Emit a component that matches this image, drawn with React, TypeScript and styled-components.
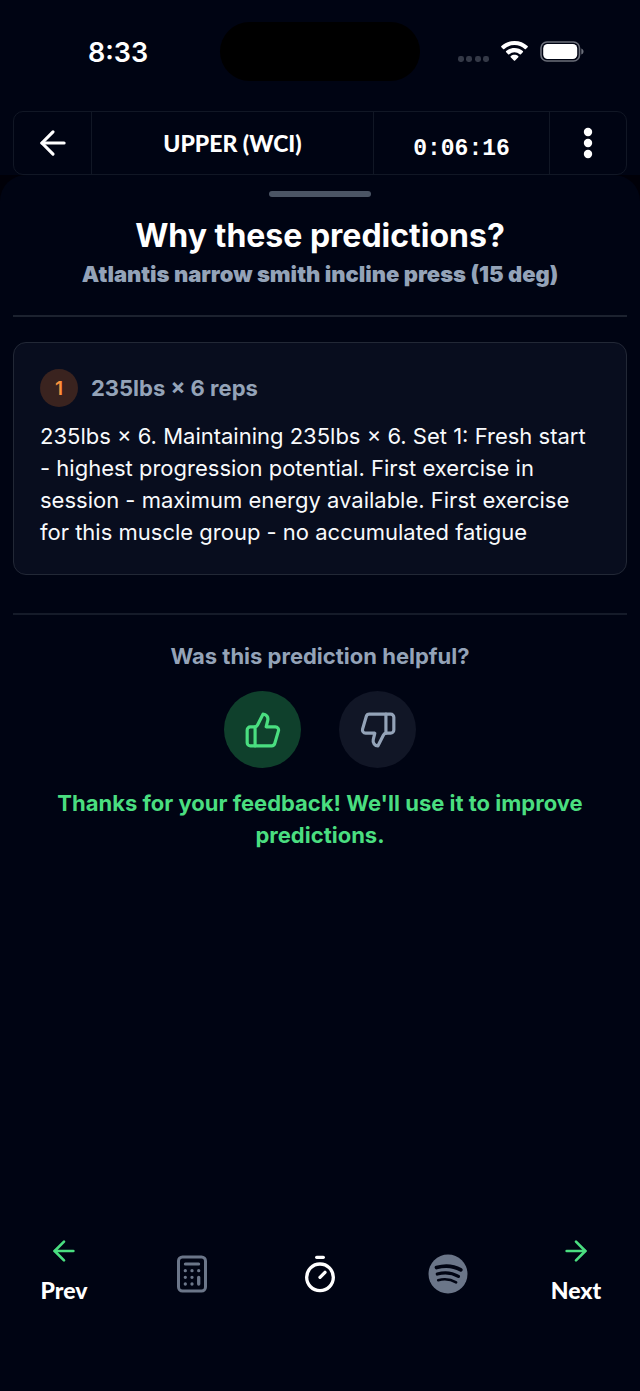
import React from "react";
import styled, { createGlobalStyle } from "styled-components";
import { ArrowLeft, ArrowRight, ThumbsDown, ThumbsUp, Timer } from "lucide-react";

const GlobalStyle = createGlobalStyle`
  *, *::before, *::after { box-sizing: border-box; }
  body {
    margin: 0;
    background: #000413;
    color: #ffffff;
    font-family: Inter, "Liberation Sans", sans-serif;
  }
  h1, h2, h3, p { margin: 0; padding: 0; }
  button { font: inherit; color: inherit; background: none; border: 0; padding: 0; cursor: pointer; }
`;

const Screen = styled.div`
  min-height: 100vh;
  display: flex;
  flex-direction: column;
`;

const StatusBar = styled.div`
  display: grid;
  grid-template-columns: 1fr 200px 1fr;
  align-items: center;
  padding: 22px 0 30px;
`;

const Clock = styled.time`
  justify-self: center;
  padding: 2px 0 0 16px;
  font-size: 27px;
  line-height: 32px;
  font-weight: 600;
`;

const Island = styled.div`
  height: 59px;
  border-radius: 30px;
  background: #000000;
`;

const StatusIcons = styled.div`
  display: flex;
  align-items: flex-end;
  justify-content: center;
  gap: 12px;
  padding-right: 18px;
`;

const Header = styled.header`
  display: flex;
  margin: 0 13px;
  height: 64px;
  border: 1px solid #111725;
  border-radius: 10px;

  > * + * { border-left: 1px solid #111725; }
`;

const HeaderButton = styled.button`
  flex: 0 0 77px;
  display: grid;
  place-items: center;
`;

const WorkoutName = styled.h1`
  flex: 1;
  display: grid;
  place-items: center;
  font: 900 23px/28px Lato, sans-serif;
`;

const Elapsed = styled.time`
  flex: 0 0 176px;
  display: grid;
  place-items: center;
  padding-top: 12px;
  font: 700 23px/28px "Liberation Mono", monospace;
`;

const SheetBackdrop = styled.div`
  flex: 1;
  display: flex;
  background: #000008;
`;

const Sheet = styled.main`
  flex: 1;
  display: flex;
  flex-direction: column;
  padding: 16px 13px 0;
  border-radius: 26px 26px 0 0;
  background: #000413;
`;

const Grabber = styled.div`
  align-self: center;
  width: 102px;
  height: 6px;
  border-radius: 3px;
  background: #4b5565;
`;

const SheetHeader = styled.div`
  padding: 20px 0 24px;
  border-bottom: 2px solid #1c222f;
  text-align: center;
`;

const Title = styled.h2`
  font-size: 32px;
  line-height: 38px;
  font-weight: 700;
`;

const Subtitle = styled.p`
  padding-top: 2px;
  font-size: 22px;
  line-height: 34px;
  font-weight: 900;
  color: #94a3b8;
`;

const SetCard = styled.section`
  margin: 25px 0 38px;
  padding: 26px;
  border: 1px solid #222836;
  border-radius: 13px;
  background: #080d1e;
`;

const SetHeading = styled.div`
  display: flex;
  align-items: center;
  gap: 13px;
  padding-bottom: 13px;
`;

const SetNumber = styled.span`
  width: 38px;
  height: 38px;
  display: grid;
  place-items: center;
  border-radius: 50%;
  background: #3a231f;
  color: #fb923c;
  font-size: 19px;
  font-weight: 600;
`;

const SetLabel = styled.h3`
  font-size: 22px;
  line-height: 32px;
  font-weight: 700;
  color: #94a3b8;
`;

const Reason = styled.p`
  font-size: 22px;
  line-height: 32px;
  color: #f8fafc;
`;

const Feedback = styled.section`
  padding-top: 25px;
  border-top: 2px solid #151b29;
  text-align: center;
  font-size: 22px;
  line-height: 32px;
  font-weight: 700;
`;

const Question = styled.p`
  color: #94a3b8;
`;

const Votes = styled.div`
  display: flex;
  justify-content: center;
  gap: 38px;
  padding: 19px 0;
`;

const VoteButton = styled.button<{ $active?: boolean }>`
  width: 77px;
  height: 77px;
  display: grid;
  place-items: center;
  border-radius: 50%;
  background: ${({ $active }) => ($active ? "#0f402c" : "#111626")};
  color: ${({ $active }) => ($active ? "#4ade80" : "#94a3b8")};
`;

const Thanks = styled.p`
  padding: 0 26px;
  color: #4ade80;
`;

const Toolbar = styled.nav`
  display: grid;
  grid-template-columns: repeat(5, 1fr);
  align-items: center;
  margin: auto -13px 0;
  padding-bottom: 87px;
`;

const StepButton = styled.button`
  display: flex;
  flex-direction: column;
  align-items: center;
  gap: 9px;
  font: 900 23px/28px Lato, sans-serif;

  svg { color: #4ade80; }
`;

const ToolButton = styled.button<{ $active?: boolean }>`
  display: grid;
  place-items: center;
  padding-top: 8px;
  color: ${({ $active }) => ($active ? "#ffffff" : "#6b7689")};
`;

function SignalDots() {
  return (
    <svg width="31" height="6" viewBox="0 0 31 6" fill="#343947">
      {[0, 8, 17, 25].map((x) => <rect key={x} x={x} width="6" height="6" rx="2.4" />)}
    </svg>
  );
}

function WifiIcon() {
  return (
    <svg width="27" height="21" viewBox="0 0 27 21" fill="#fff">
      <path d="M13.500 0C8.400 0 3.800 1.900.4 5c-.4.400-.4.900 0 1.300l1.700 1.700c.3.300.8.300 1.200 0a15.200 15.200 0 0 1 20.400 0c.4.300.9.300 1.200 0l1.700-1.700c.4-.4.400-.9 0-1.300C23.200 1.900 18.600 0 13.500 0z" />
      <path d="M13.500 6.900c-3.200 0-6.100 1.200-8.300 3.200-.4.400-.4.900 0 1.200l1.900 1.900c.3.300.8.300 1.200 0a7.800 7.800 0 0 1 10.400 0c.4.300.9.300 1.200 0l1.900-1.900c.4-.3.400-.8 0-1.200-2.200-2-5.100-3.200-8.300-3.200z" />
      <path d="M13.500 13.700c-1.400 0-2.700.500-3.700 1.300-.4.300-.4.800-.1 1.200l3.200 3.200c.4.400.8.400 1.200 0l3.200-3.200c.3-.4.300-.9-.1-1.200-1-.8-2.300-1.300-3.700-1.300z" />
    </svg>
  );
}

function BatteryIcon() {
  return (
    <svg width="44" height="21" viewBox="0 0 44 21">
      <rect x="1" y="1" width="38.500" height="19" rx="6" fill="none" stroke="#6b6f7a" strokeWidth="1.600" />
      <rect x="3.200" y="3" width="34" height="15" rx="4.400" fill="#fff" />
      <path d="M41.300 7.500c1.400.5 2.200 1.500 2.200 3s-.8 2.500-2.200 3z" fill="#6b6f7a" />
    </svg>
  );
}

function MoreIcon() {
  return (
    <svg width="10" height="32" viewBox="0 0 10 32" fill="currentColor">
      <circle cx="5" cy="5" r="4.200" />
      <circle cx="5" cy="16" r="4.200" />
      <circle cx="5" cy="27" r="4.200" />
    </svg>
  );
}

function CalculatorIcon() {
  return (
    <svg width="38" height="38" viewBox="0 0 38 38" fill="none" stroke="currentColor" strokeLinecap="round">
      <rect x="5.500" y="2" width="27" height="34" rx="4" strokeWidth="3" />
      <path d="M12.300 9h13.400" strokeWidth="3" />
      <path d="M12.300 15.700h.01M19 15.700h.01M25.700 15.700h.01M12.300 22.300h.01M19 22.300h.01M12.300 29h.01M19 29h.01M25.700 22.300v6.700" strokeWidth="3.300" />
    </svg>
  );
}

function SpotifyIcon() {
  return (
    <svg width="40" height="40" viewBox="0 0 40 40">
      <circle cx="20" cy="20" r="19.500" fill="currentColor" />
      <g fill="none" stroke="#000413" strokeLinecap="round">
        <path d="M8.500 13.500c8-2.300 17.500-1.500 24.300 2.400" strokeWidth="3.700" />
        <path d="M9.300 20c7-2 15-1.200 21.100 2.400" strokeWidth="3.200" />
        <path d="M10.200 26.200c6.200-1.600 12.600-.9 17.900 2.100" strokeWidth="2.600" />
      </g>
    </svg>
  );
}

export default function App() {
  return (
    <>
      <GlobalStyle />
      <Screen>
        <StatusBar>
          <Clock>8:33</Clock>
          <Island />
          <StatusIcons>
            <SignalDots />
            <WifiIcon />
            <BatteryIcon />
          </StatusIcons>
        </StatusBar>

        <Header>
          <HeaderButton aria-label="Back"><ArrowLeft size={38} /></HeaderButton>
          <WorkoutName>UPPER (WCI)</WorkoutName>
          <Elapsed>0:06:16</Elapsed>
          <HeaderButton aria-label="More options"><MoreIcon /></HeaderButton>
        </Header>

        <SheetBackdrop>
          <Sheet>
            <Grabber />
            <SheetHeader>
              <Title>Why these predictions?</Title>
              <Subtitle>Atlantis narrow smith incline press (15 deg)</Subtitle>
            </SheetHeader>

            <SetCard>
              <SetHeading>
                <SetNumber>1</SetNumber>
                <SetLabel>235lbs × 6 reps</SetLabel>
              </SetHeading>
              <Reason>
                235lbs × 6. Maintaining 235lbs × 6. Set 1: Fresh start - highest progression potential. First
                exercise in session - maximum energy available. First exercise for this muscle group - no
                accumulated fatigue
              </Reason>
            </SetCard>

            <Feedback>
              <Question>Was this prediction helpful?</Question>
              <Votes>
                <VoteButton $active aria-label="Helpful" aria-pressed="true"><ThumbsUp size={38} /></VoteButton>
                <VoteButton aria-label="Not helpful" aria-pressed="false"><ThumbsDown size={38} /></VoteButton>
              </Votes>
              <Thanks role="status">Thanks for your feedback! We'll use it to improve predictions.</Thanks>
            </Feedback>

            <Toolbar aria-label="Workout tools">
              <StepButton><ArrowLeft size={32} />Prev</StepButton>
              <ToolButton aria-label="Calculator"><CalculatorIcon /></ToolButton>
              <ToolButton $active aria-label="Rest timer"><Timer size={40} /></ToolButton>
              <ToolButton aria-label="Spotify"><SpotifyIcon /></ToolButton>
              <StepButton><ArrowRight size={32} />Next</StepButton>
            </Toolbar>
          </Sheet>
        </SheetBackdrop>
      </Screen>
    </>
  );
}
